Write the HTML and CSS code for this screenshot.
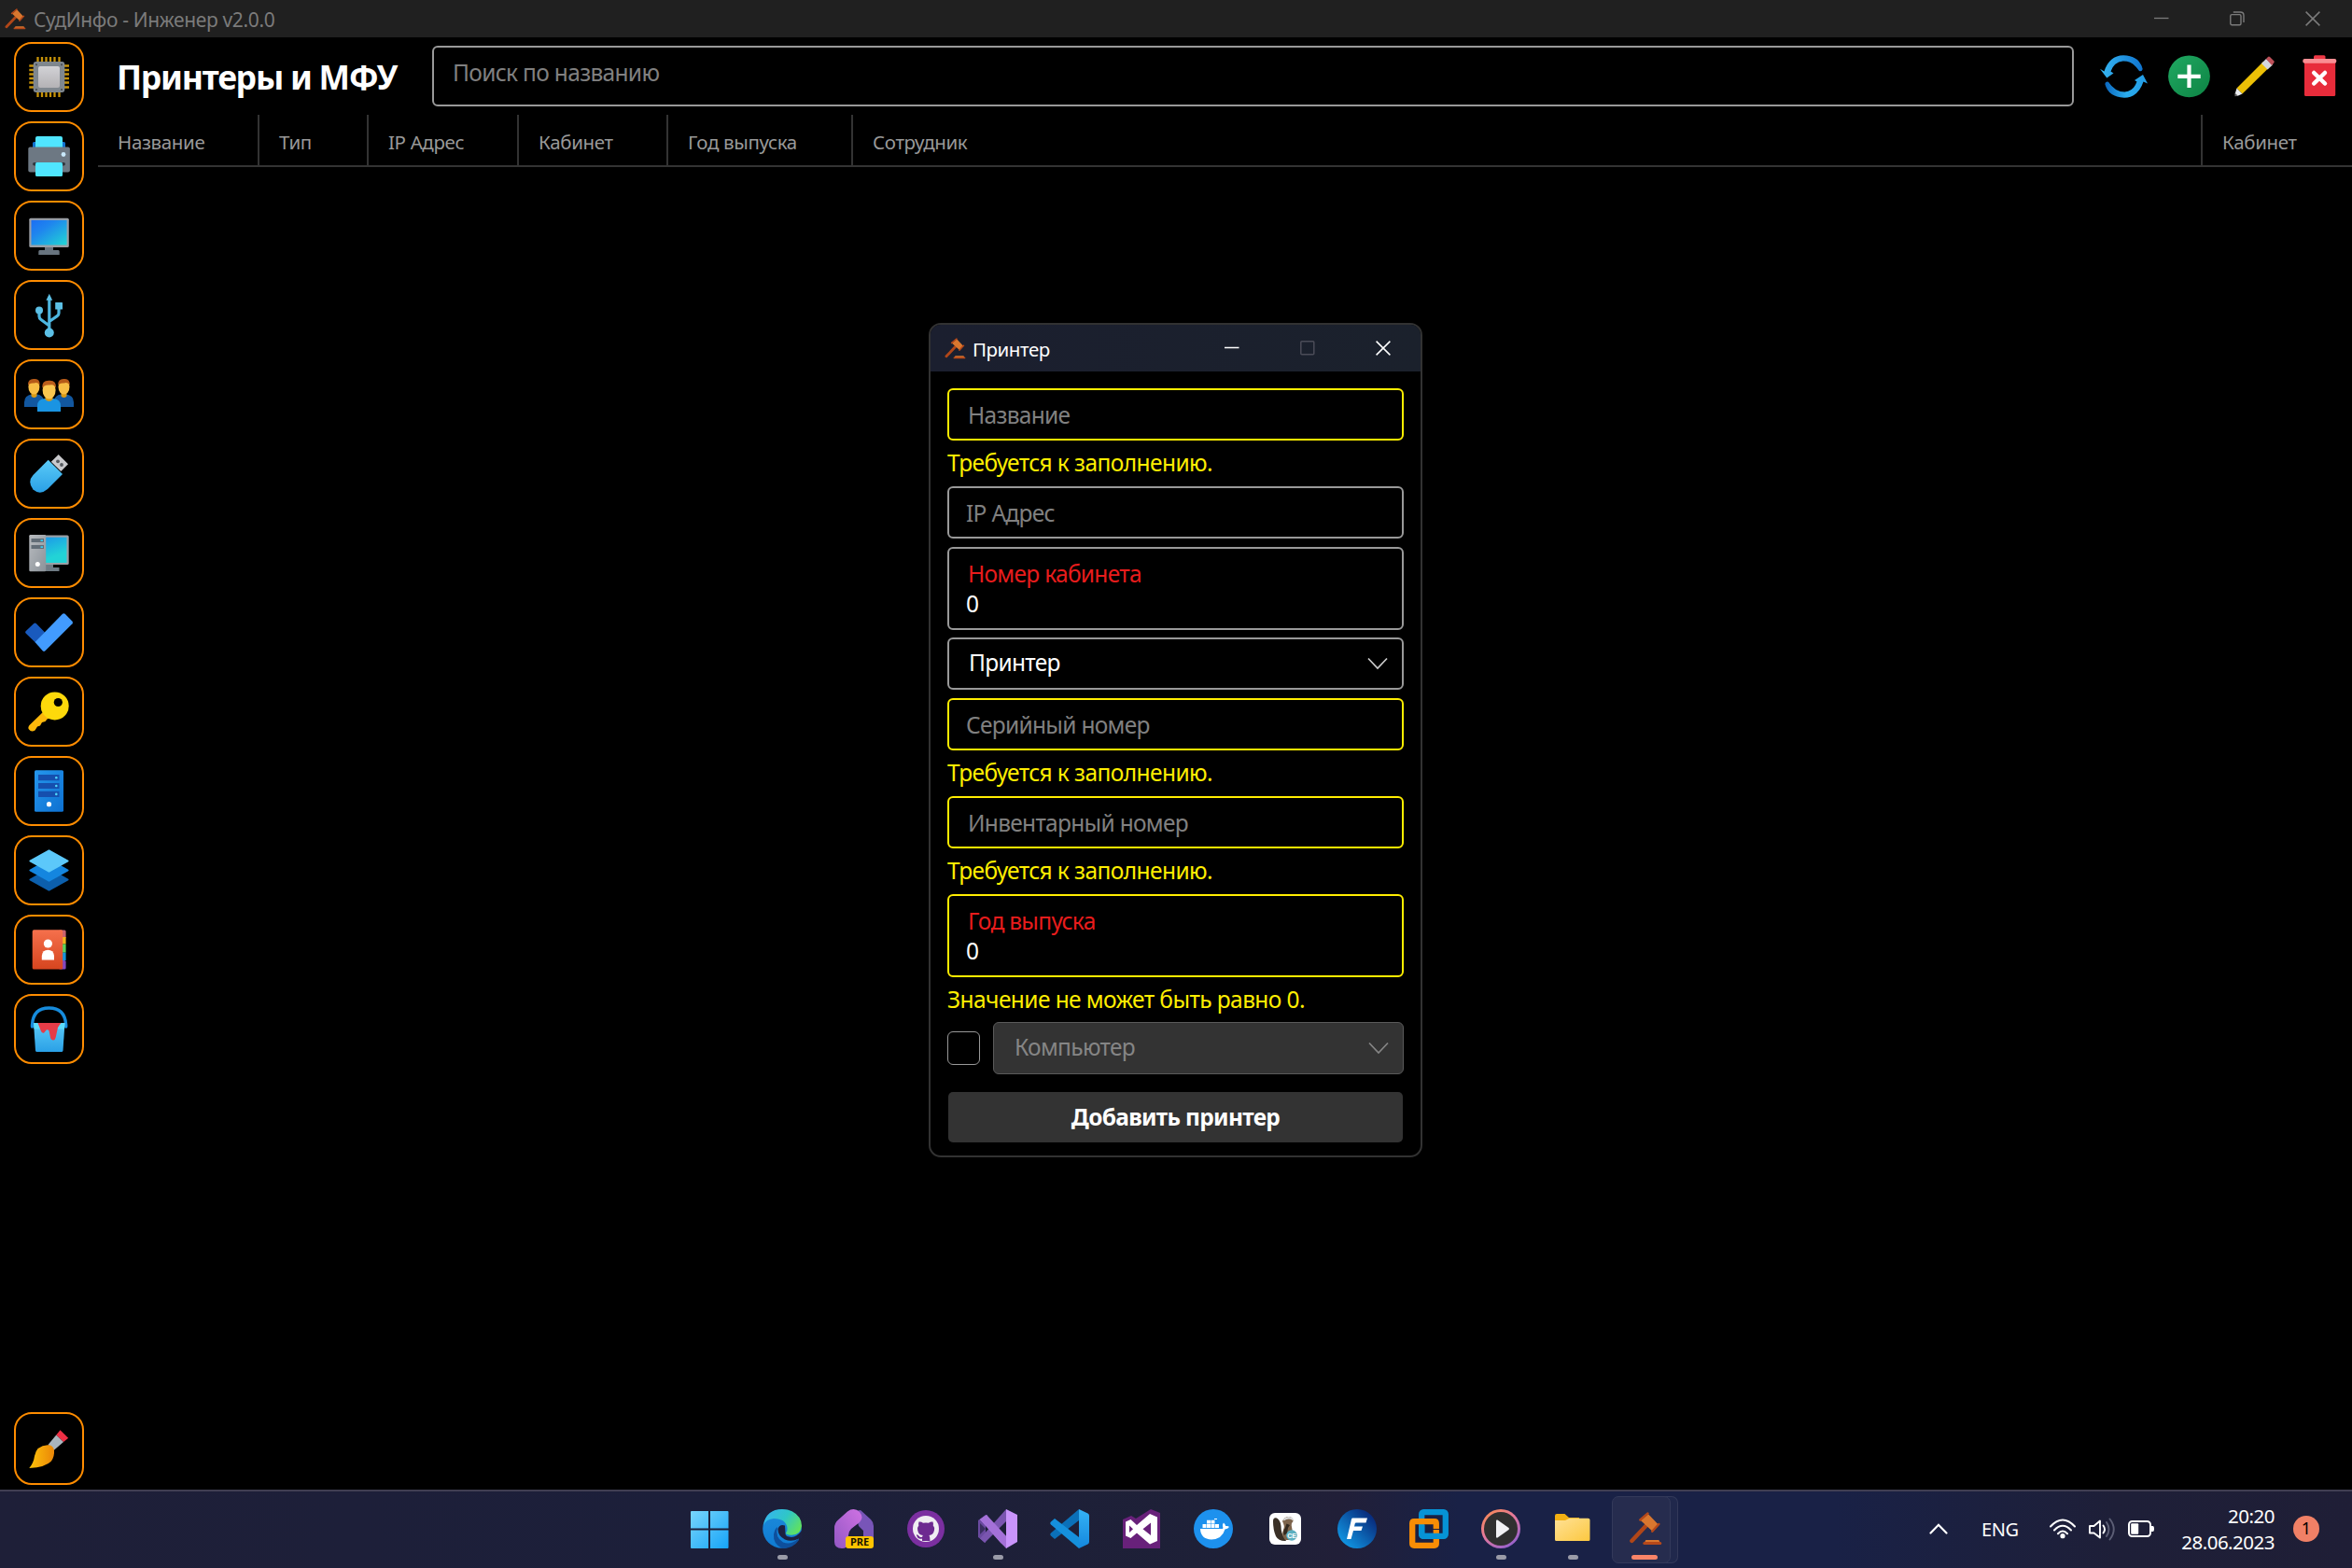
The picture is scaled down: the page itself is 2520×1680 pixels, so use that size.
FILE: index.html
```html
<!DOCTYPE html>
<html lang="ru">
<head>
<meta charset="utf-8">
<title>СудИнфо - Инженер v2.0.0</title>
<link rel="stylesheet" href="styles.css">
</head>
<body>
<svg class="defs" aria-hidden="true">
  <defs>
    <linearGradient id="gScreen" x1="0" y1="0" x2="1" y2="1"><stop offset="0" stop-color="#1b6ef3"/><stop offset=".35" stop-color="#1f86ee"/><stop offset="1" stop-color="#21d6d4"/></linearGradient>
    <linearGradient id="gScreen2" x1="0" y1="0" x2=".3" y2="1"><stop offset="0" stop-color="#1c9be8"/><stop offset=".8" stop-color="#22d3d6"/></linearGradient>
    <linearGradient id="gGrey" x1="0" y1="0" x2="1" y2="1"><stop offset="0" stop-color="#b9bcc0"/><stop offset="1" stop-color="#8b9299"/></linearGradient>
    <linearGradient id="gChip" x1="0" y1="0" x2="0" y2="1"><stop offset="0" stop-color="#d2d2d6"/><stop offset="1" stop-color="#b4b2b5"/></linearGradient>
    <linearGradient id="gSky" x1="0" y1="0" x2="0" y2="1"><stop offset="0" stop-color="#5bcbf8"/><stop offset="1" stop-color="#2aa0e6"/></linearGradient>
    <linearGradient id="gAzure" x1="0" y1="0" x2="1" y2="1"><stop offset="0" stop-color="#2597ee"/><stop offset="1" stop-color="#0d70d0"/></linearGradient>
    <linearGradient id="gRed" x1="0" y1="0" x2="0" y2="1"><stop offset="0" stop-color="#f5704c"/><stop offset="1" stop-color="#d6451f"/></linearGradient>
    <linearGradient id="gBrush" x1="0" y1="0" x2="1" y2="0"><stop offset="0" stop-color="#fec40a"/><stop offset="1" stop-color="#ea8608"/></linearGradient>
    <linearGradient id="gPlus" x1="0" y1="0" x2="1" y2="1"><stop offset="0" stop-color="#20a862"/><stop offset="1" stop-color="#0d8444"/></linearGradient>
    <linearGradient id="gArrowA" x1="0" y1="0" x2="1" y2="0"><stop offset="0" stop-color="#37b8f3"/><stop offset="1" stop-color="#0f74cf"/></linearGradient>
    <linearGradient id="gArrowB" x1="0" y1="0" x2="1" y2="0"><stop offset="0" stop-color="#0a66be"/><stop offset=".5" stop-color="#2aaced"/><stop offset="1" stop-color="#239ce6"/></linearGradient>
    <linearGradient id="gWin" x1="0" y1="0" x2="1" y2="1"><stop offset="0" stop-color="#78d5fb"/><stop offset="1" stop-color="#16a4f8"/></linearGradient>
    <linearGradient id="gEdgeTop" x1="0" y1=".2" x2="1" y2=".7"><stop offset="0" stop-color="#36b4ee"/><stop offset=".5" stop-color="#2fc6c8"/><stop offset="1" stop-color="#63e25a"/></linearGradient>
    <linearGradient id="gEdge" x1="0" y1="0" x2="0" y2="1"><stop offset="0" stop-color="#1d8bdb"/><stop offset="1" stop-color="#0f7bd3"/></linearGradient>
    <linearGradient id="gHome" x1="0" y1="1" x2="1" y2="0"><stop offset="0" stop-color="#9357c4"/><stop offset="1" stop-color="#cf72e3"/></linearGradient>
    <linearGradient id="gCode" x1="0" y1="0" x2="0" y2="1"><stop offset="0" stop-color="#35b3f6"/><stop offset="1" stop-color="#1487dd"/></linearGradient>
    <linearGradient id="gFork" x1="1" y1="0" x2="0" y2="1"><stop offset="0" stop-color="#061567"/><stop offset="1" stop-color="#12a9f5"/></linearGradient>
    <linearGradient id="gMedia" x1="0" y1="0" x2=".7" y2="1"><stop offset="0" stop-color="#fa8d45"/><stop offset=".5" stop-color="#e6799c"/><stop offset="1" stop-color="#9561cd"/></linearGradient>
    <linearGradient id="gFolder" x1="0" y1="0" x2="1" y2="1"><stop offset="0" stop-color="#ffe196"/><stop offset="1" stop-color="#fcc840"/></linearGradient>
    <symbol id="gavel" viewBox="0 0 35 36">
      <path d="M2.5 31 18 14.5" stroke="#b04618" stroke-width="4.4" stroke-linecap="round"/>
      <path d="M12 9 20 2 31 13.500 24.500 20.500Z" fill="#d9772f"/>
      <path d="M11.500 8.500 19.700 1.500M24.500 20.800 31.500 13" stroke="#b5481a" stroke-width="2.400" stroke-linecap="round"/>
      <path d="M17.500 30H31.500L33 33H16Z" fill="#d9772f"/><rect x="14.500" y="32" width="20" height="3" rx="1.500" fill="#b5481a"/>
    </symbol>
    <symbol id="chevron" viewBox="0 0 22 14"><path d="M1 1.500 11 12 21 1.500" fill="none" stroke="currentColor" stroke-width="1.700"/></symbol>
    <symbol id="win-close" viewBox="0 0 16 16"><path d="M.6.6 15.400 15.400M15.400.6.6 15.400" stroke="currentColor" stroke-width="1.500"/></symbol>
    <symbol id="win-min" viewBox="0 0 16 16"><path d="M0 7.500H15.500" stroke="currentColor" stroke-width="1.300"/></symbol>
    <symbol id="win-max" viewBox="0 0 16 16"><rect x=".8" y=".8" width="14" height="14" rx="1" fill="none" stroke="currentColor" stroke-width="1.500"/></symbol>
    <symbol id="win-restore" viewBox="0 0 16 16"><g fill="none" stroke="currentColor" stroke-width="1.400"><rect x=".8" y="3.600" width="11.200" height="11.200" rx="1.500"/><path d="M3.800 1H11.500Q15 1 15 4.500V12"/></g></symbol>
  </defs>
</svg>

<header class="titlebar">
  <svg class="titlebar-logo"><use href="#gavel"/></svg>
  <span class="titlebar-text">СудИнфо - Инженер v2.0.0</span>
  <div class="window-controls">
    <svg><use href="#win-min"/></svg><svg><use href="#win-restore"/></svg><svg><use href="#win-close"/></svg>
  </div>
</header>

<div class="app">
  <nav class="sidebar">
    <button class="nav-btn"><svg viewBox="2 2 71 71"><path d="M25.500 16V59M30 16V59M34.500 16V59M39 16V59M43.500 16V59M48.500 16V59M16.300 25.500H59M16.300 30H59M16.300 34.500H59M16.300 39H59M16.300 43.500H59M16.300 48.500H59" stroke="#c79308" stroke-width="2.300"/><rect x="20.700" y="21" width="33.600" height="33" rx="3" fill="#7f878e"/><rect x="26" y="26" width="23" height="23" rx="2" fill="url(#gChip)"/><g fill="#454b52"><circle cx="24" cy="24.300" r="1.100"/><circle cx="51" cy="24.300" r="1.100"/><circle cx="24" cy="51" r="1.100"/><circle cx="51" cy="51" r="1.100"/></g></svg></button>
    <button class="nav-btn"><svg viewBox="2 2 71 71"><rect x="20" y="22" width="35" height="8" rx="1.500" fill="#1272cf"/><rect x="23" y="16" width="29" height="14" rx="2" fill="#50e6ff"/><rect x="15.300" y="27.500" width="44.600" height="27" rx="2" fill="#6d7883"/><rect x="20" y="44" width="35" height="3.500" rx="1.700" fill="#30373e"/><rect x="23" y="44" width="29" height="15" rx="1.500" fill="#50e6ff"/><circle cx="53" cy="35.500" r="2.400" fill="#c8e8fa"/></svg></button>
    <button class="nav-btn"><svg viewBox="2 2 71 71"><path d="M33 49H42V53H47.500Q48.700 53 48.700 54.500V58H26.300V54.500Q26.300 53 27.500 53H33Z" fill="#68747f"/><rect x="16.300" y="18.700" width="42.500" height="31.300" rx="1.500" fill="#9b9fa5"/><rect x="18.500" y="20.900" width="38.100" height="26.600" fill="url(#gScreen)"/></svg></button>
    <button class="nav-btn"><svg viewBox="2 2 71 71"><g fill="none" stroke="#4db6e0" stroke-width="3.200"><path d="M37.800 20V54M27 34V39Q27 41 29 42.500L37.800 49M48 29V35.500Q48 37.500 46.200 38.700L37.800 44.500"/></g><g fill="#5cc0e6"><path d="M37.800 14.700 41.200 21.700H34.400Z"/><circle cx="27" cy="32.500" r="4"/><rect x="44.200" y="24" width="7.800" height="7.600" rx=".5"/><circle cx="37.800" cy="56.500" r="5"/></g></svg></button>
    <button class="nav-btn"><svg viewBox="2 2 71 71"><path d="M11 51V46Q11 38 20 37.500H24Q31 38 32 44V51ZM64 51V46Q64 38 55 37.500H51Q44 38 43 44V51Z" fill="#12579f"/><path d="M18.500 34H24.500V39.500Q21.500 42.500 18.500 39.500ZM50.500 34H56.500V39.500Q53.500 42.500 50.500 39.500Z" fill="#d99a16"/><ellipse cx="21.400" cy="29.500" rx="6" ry="8" fill="#f7be45"/><ellipse cx="53.500" cy="29.500" rx="6" ry="8" fill="#f7be45"/><path d="M15 28Q14.500 20.500 22 21Q28 20.500 27.600 28Q26 24 21.500 25.500Q16.500 25 15 28ZM47.200 28Q46.700 20.500 54 21Q60 20.500 59.800 28Q58 24 53.500 25.500Q48.500 25 47.200 28Z" fill="#b55a18"/><path d="M25 56V50Q25 42.500 33 42H42Q50 42.500 50 50V56Z" fill="#1a94e2"/><path d="M33.500 38H41.500V43Q37.500 47 33.500 43Z" fill="#d99a16"/><ellipse cx="37.600" cy="33" rx="7" ry="9.500" fill="#fac64f"/><path d="M30.200 31Q29.500 22.500 37.500 22.700Q45.500 22 45.200 31Q43 26 38 27.500Q32 27 30.200 31Z" fill="#bb5e1b"/></svg></button>
    <button class="nav-btn"><svg viewBox="2 2 71 71"><path d="M47.700 17 58 27.300 50.300 35 39.800 24.700Z" fill="#c9c9cc"/><circle cx="47" cy="24.300" r="1.900" fill="#55595e"/><circle cx="51" cy="28" r="1.900" fill="#55595e"/><path d="M36.700 22.700 52 38 36 54Q28 61 20.500 54.500Q14 46 20.500 39Z" fill="url(#gSky)"/></svg></button>
    <button class="nav-btn"><svg viewBox="2 2 71 71"><path d="M33 49H42V53H48.500V57H33Z" fill="#6f7b84"/><rect x="30" y="18.500" width="28.700" height="31.500" rx="1.500" fill="#9b9fa5"/><rect x="34" y="20.700" width="22.500" height="27.300" fill="url(#gScreen2)"/><rect x="16.300" y="18" width="17.900" height="39.300" rx="1.200" fill="url(#gGrey)"/><path d="M18.500 22H32V26H18.500ZM18.500 29H32V33H18.500Z" fill="#626d77"/><path d="M28.500 23.200H31V25H28.500ZM28.500 30.200H31V32H28.500Z" fill="#3ccbf0"/><circle cx="25.300" cy="49.500" r="2.500" fill="#fff"/></svg></button>
    <button class="nav-btn"><svg viewBox="2 2 71 71"><path d="M21 28.200Q22.500 27 24 28.200L33 37.500 23 48.500 12.600 38.500Q11.500 37 12.600 36.200Z" fill="#195abd"/><path d="M52 17.800Q53.300 16.500 54.700 17.800L62.500 25.800Q63.500 27 62.500 28.200L33.500 57.300Q32 58.500 30.700 57.300L22.500 48Z" fill="#429bff"/></svg></button>
    <button class="nav-btn"><svg viewBox="2 2 71 71"><path d="M33 36 16.500 52Q14.500 54.500 16 56.500Q18.500 60 22.500 57.500L25 53.500 28 52.500 30 49 33.500 48 35.500 45.500 42 43Z" fill="#fdb80b"/><circle cx="43.700" cy="31.400" r="15" fill="#fdd90b"/><circle cx="47.300" cy="27.500" r="4.600" fill="#000"/></svg></button>
    <button class="nav-btn"><svg viewBox="2 2 71 71"><rect x="22" y="15.200" width="31" height="44.500" rx="1.500" fill="url(#gAzure)"/><path d="M26 20H48.500V26.300H26ZM26 29H48.500V35H26ZM26 37.800H48.500V44H26Z" fill="#154fae"/><g fill="#4fd5fa"><circle cx="45.300" cy="23.200" r="1.300"/><circle cx="45.300" cy="32" r="1.300"/><circle cx="45.300" cy="40.900" r="1.300"/></g><circle cx="37.500" cy="51.700" r="2.600" fill="#fff"/></svg></button>
    <button class="nav-btn"><svg viewBox="2 2 71 71"><path d="M16.800 46.800 37.500 35 58.200 46.800Q59.200 47.500 58.200 48.200L37.500 59.700 16.800 48.200Q15.800 47.500 16.800 46.800Z" fill="#0c5fac"/><path d="M16.800 36.800 37.500 25 58.200 36.800Q59.200 37.500 58.200 38.200L37.500 49.700 16.800 38.200Q15.800 37.500 16.800 36.800Z" fill="#1486df"/><path d="M16.800 26.800 37.500 15.200 58.200 26.800Q59.200 27.500 58.200 28.200L37.500 39.700 16.800 28.200Q15.800 27.500 16.800 26.800Z" fill="#5cc8fa"/></svg></button>
    <button class="nav-btn"><svg viewBox="2 2 71 71"><rect x="48" y="16.500" width="7.600" height="9" rx="1.500" fill="#c8626f"/><path d="M48 24H55.600V31.500H48Z" fill="#f2b51c"/><path d="M48 31.500H55.600V40.700H48Z" fill="#5ad35c"/><path d="M48 40.700H55.600V49H48Z" fill="#1694dc"/><rect x="48" y="49" width="7.600" height="9.600" rx="1.500" fill="#8447bd"/><rect x="19.700" y="16.300" width="32.500" height="42.300" rx="1.700" fill="url(#gRed)"/><circle cx="36.400" cy="31" r="4.600" fill="#fff"/><path d="M29.800 48.600V44Q30.500 37.700 36.400 37.700T43 44V48.600Z" fill="#fff"/></svg></button>
    <button class="nav-btn"><svg viewBox="2 2 71 71"><path d="M19.500 35V33Q20.500 15 37.500 15T55.700 33V35" fill="none" stroke="#168bdc" stroke-width="3.400" stroke-linecap="round"/><path d="M21 31H54.500L52.500 60.500Q52.300 62 51 62H24.500Q23.300 62 23 60.500Z" fill="url(#gSky)"/><path d="M21 31H54.500L54 37.500H21.500Z" fill="#5bdcfc"/><path d="M25.500 31H50.500Q48 34 47 36L44.700 46.500Q44 49.800 41.800 49.500 39 49 38.700 45L37.500 39.500Q36.500 37.500 34.700 38.500L32.500 41.300Q30.500 42.800 29 40Z" fill="#e63c48"/></svg></button>
    <button class="nav-btn nav-btn-bottom"><svg viewBox="2 3.500 71 71"><path d="M49.500 18.800 58.200 27.200 53 31.500 45.200 24Z" fill="#ee2f44"/><path d="M45.200 24 53 31.500 42.500 40.500 36.500 34.500Z" fill="#a9b5be"/><path d="M36 34.800Q42 34.500 43 40.500 43.500 47 40 52 34 58.500 16.300 59.500 21 54 22 46.500 24 35.500 36 34.800Z" fill="url(#gBrush)"/></svg></button>
  </nav>

  <main class="content">
    <div class="toolbar">
      <h1 class="page-title">Принтеры и МФУ</h1>
      <div class="search">Поиск по названию</div>
      <svg class="tool" viewBox="0 0 51 46"><path d="M4.500 17.500Q10 .7 25 .3 42 .7 45.700 15 45 18 42 17 35 6 24.500 6.500 15 7.500 11.500 17.500L14.500 19.500 7.300 24.500 0 14.800Z" fill="url(#gArrowA)"/><path d="M46.500 28.500Q41 45.300 26 45.700 9 45 5.300 31 5.700 27.700 9 28.700 16 39.500 26.500 39.500 36 38.500 39.500 28.500L37 27 46 21 51 30.500Z" fill="url(#gArrowB)"/></svg>
      <svg class="tool" viewBox="-3 0 51 46"><circle cx="22.500" cy="22.800" r="22.400" fill="url(#gPlus)"/><path d="M22.500 10.500V35M10.300 22.800H34.700" stroke="#fff" stroke-width="4.200"/></svg>
      <svg class="tool" viewBox="-4 0 51 46"><path d="M2.500 35.500 31 7 37 13.500 8.500 41.500Z" fill="#ecc006"/><path d="M29 9 34 4 41 10.500 35.500 15.500Z" fill="#d4d7dc"/><path d="M34 4 36 1.900Q37 1.200 38 2L42.500 6.500Q43 7.500 42.200 8.600L40 11Z" fill="#bd5059"/><path d="M2.500 35.500 8.500 41.500 3 44 .5 42Z" fill="#e9ebee"/><path d="M1 41 4 43.700.3 44.200Z" fill="#666"/></svg>
      <svg class="tool" viewBox="-7 0 51 46"><rect x="12" y=".3" width="12.500" height="5" rx="1.500" fill="#ef3946"/><rect x="2" y="6" width="33.200" height="38" rx="1.500" fill="#e82c3b"/><rect x=".3" y="4" width="36" height="4.800" rx="2" fill="#fa8e93"/><path d="M12.200 19 24 30.500M24 19 12.200 30.500" stroke="#fff" stroke-width="4.500" stroke-linecap="round"/></svg>
    </div>
    <div class="table-head">
      <div class="th">Название</div>
      <div class="th">Тип</div>
      <div class="th">IP Адрес</div>
      <div class="th">Кабинет</div>
      <div class="th">Год выпуска</div>
      <div class="th">Сотрудник</div>
      <div class="th">Кабинет</div>
    </div>
  </main>
</div>

<section class="dialog">
  <header class="dialog-bar">
    <svg class="titlebar-logo"><use href="#gavel"/></svg>
    <span class="dialog-title">Принтер</span>
    <div class="window-controls">
      <svg><use href="#win-min"/></svg><svg class="disabled"><use href="#win-max"/></svg><svg><use href="#win-close"/></svg>
    </div>
  </header>
  <form class="form">
    <div class="field invalid indent">Название</div>
    <div class="message">Требуется к заполнению.</div>
    <div class="field">IP Адрес</div>
    <div class="field tall gap-9"><span class="float-label">Номер кабинета</span><span class="value">0</span></div>
    <div class="field select gap-8"><span>Принтер</span><svg class="chev"><use href="#chevron"/></svg></div>
    <div class="field invalid gap-9">Серийный номер</div>
    <div class="message">Требуется к заполнению.</div>
    <div class="field invalid indent">Инвентарный номер</div>
    <div class="message">Требуется к заполнению.</div>
    <div class="field tall invalid"><span class="float-label">Год выпуска</span><span class="value">0</span></div>
    <div class="message message-last">Значение не может быть равно 0.</div>
    <div class="computer-row">
      <span class="checkbox"></span>
      <div class="field select off"><span>Компьютер</span><svg class="chev"><use href="#chevron"/></svg></div>
    </div>
    <div class="submit">Добавить принтер</div>
  </form>
</section>

<footer class="taskbar">
  <div class="tasks">
    <div class="task"><svg viewBox="1 0 42 42"><path d="M1 2H19V20.500H0V3Q0 2 1 2ZM21 2H39.500Q40.500 2 40.500 3V20.500H21ZM0 22.500H19V42H1Q0 42 0 41ZM21 22.500H40.500V41Q40.500 42 39.500 42H21Z" fill="url(#gWin)" transform="translate(1 0)"/></svg></div>
    <div class="task running"><svg viewBox="0 0 42 42"><circle cx="21" cy="21" r="20.800" fill="url(#gEdge)"/><path d="M16 19Q13 30 22 35.500 30 39 38.500 31.500 39.500 31.800 38.700 33.500 33 42 21 42 11 37 12 27 13 21 16 19Z" fill="#0e4f9c"/><path d="M24.500 26.500Q24.500 29.500 31 30 37 29.500 41 24L43 22V31L39 31.500Q31 35.500 24 32.500 16 28.500 16.500 21 18.500 15.500 24 17.500Z" fill="#1d2040"/><path d="M1 17Q4 0 21 0 33 0 39.500 9 42 13 42 18 41 27.500 31 27.800 25 27.500 25 25.500 27 23.500 26.500 20 25 10 12 10 4 10.500 1 17Z" fill="url(#gEdgeTop)"/></svg></div>
    <div class="task"><svg viewBox="0 0 42 42"><path d="M22 2 28 1 39 11Q42 14 42 18V36H31V23L26 18Z" fill="#7855b8"/><path d="M0 20Q0 15 4 11.500L14 2.500Q21-2.500 27 3 32 9 27 14L18 21Q15 24 15 28V36Q14 42 8 42 0 42 0 35Z" fill="url(#gHome)"/><rect x="12" y="29" width="30" height="13" rx="3" fill="#ffc400"/><text x="27" y="39.300" text-anchor="middle" class="pre">PRE</text></svg></div>
    <div class="task"><svg viewBox="0 0 42 42"><circle cx="21" cy="21" r="20" fill="#7b2fa0"/><circle cx="21" cy="21" r="14" fill="#f0edf2"/><path d="M13.500 13.500Q16 13 18 14.800 21 14.200 24 14.800 26 13 28.500 13.500 29.300 16 28.700 17.300 30.500 19.300 30 22.500 29 27.500 24.500 28 25.500 29.500 25.500 34H17V31.500Q12.500 32.500 11.500 29 10.500 27.500 11 27.300 13 27.500 13.800 29 15 30.500 17 29.700L17.800 28Q13 27.500 12.200 22.500 11.700 19.300 13.400 17.300 12.800 16 13.500 13.500Z" fill="#6d2a90"/></svg></div>
    <div class="task running"><svg viewBox="0 0 42 42"><path d="M0 12 8 6V36L0 30Z" fill="#6a4aa0"/><path d="M7 36 2 31.500 30 0V13Z" fill="#7a55b0"/><path d="M2 11 9 6 31 42 24 36Z" fill="#a978d8"/><path d="M2 11 9 6 33 32 30 42Z" fill="#a471d8"/><path d="M30 0 42 6V35L30 42Z" fill="#c994fb"/><path d="M2 15 8 21 2 27Z" fill="#3a2e60"/></svg></div>
    <div class="task"><svg viewBox="0 0 42 42"><path d="M5 32 1 28.500Q-.5 27 1 25.500L31 0V12Z" fill="#0b70b8"/><path d="M5 10 1 13.500Q-.5 15 1 16.500L31 42V30Z" fill="#1590dc"/><path d="M31 0 40.500 4.500Q42 5.200 42 7V35Q42 36.800 40.500 37.500L31 42Z" fill="url(#gCode)"/></svg></div>
    <div class="task"><svg viewBox="-1 0 42 42"><path d="M0 11 9 7 14 10 30 0 40 4V42H0Z" fill="#68217a"/><path fill-rule="evenodd" d="M3 13.500 8.500 11 15 17 29 5 37 8.500V34L29 37.500 15 25.500 8.500 31 3 28.500ZM7 17.500V25L11 21.300ZM30 14.500 21.500 21.300 30 28Z" fill="#fff"/></svg></div>
    <div class="task"><svg viewBox="0 0 42 42"><circle cx="21" cy="21" r="21" fill="#1d91ee"/><path d="M7 21H31Q31.800 20.500 31 18 30.500 16 32 14.500 34 16 34.200 18Q37 17.500 38 19 36.500 21 33.500 21.500 30.500 32 19 32.500 7.500 32 7 21Z" fill="#fff"/><path d="M9.500 16H13.500V20H9.500ZM14 16H18V20H14ZM18.500 16H22.500V20H18.500ZM23 16H27V20H23ZM14 11.800H18V15.500H14ZM18.500 11.800H22.500V15.500H18.500ZM22 10H25V11H22Z" fill="#fff"/></svg></div>
    <div class="task"><svg viewBox="0 0 42 42"><rect x="4" y="4" width="34" height="34" rx="6" fill="#fff"/><path d="M8 13Q8 8.500 12 9.500 16 12 16.500 18 16.500 26 20 30L22 34Q14 34.500 11 29 8 22 8 13Z" fill="#3a3026"/><path d="M18 13Q20 7.500 26 8 29.500 9 29.500 13 27 15 28 19 30 27 27 33H21Q16.500 28 19 22 21 18 18 13Z" fill="#7d644c"/><path d="M19 10.500Q24 6 29.500 9.500L29 12Q24.500 9 19.500 12.500Z" fill="#dcdcdc"/><path d="M22.500 15.500 26 17 24 20 23 26 19.500 28Q18.500 23 21 20Z" fill="#33291f"/><circle cx="28" cy="28" r="5.800" fill="#5bafc0"/><text x="28" y="31" text-anchor="middle" class="ce">CE</text></svg></div>
    <div class="task"><svg viewBox="0 0 42 42"><circle cx="21" cy="21" r="21" fill="url(#gFork)"/><path d="M16 9.500H32L30.500 14.500H20Q19 14.500 18.700 15.500L18 18.500H27L25.500 23H17L14.500 32H10L14.500 13Q15 9.500 16 9.500Z" fill="#fff"/></svg></div>
    <div class="task"><svg viewBox="0 0 42 42"><g fill="none" stroke-width="6.300"><rect x="13.200" y="3.200" width="25.600" height="25.600" rx="2" stroke="#0693d6"/><path d="M28.800 22V36.800Q28.800 38.800 26.800 38.800H5.200Q3.200 38.800 3.200 36.800V15.200Q3.200 13.200 5.200 13.200H26.800Q28.800 13.200 28.800 15.200V21" stroke="#f88d06"/><path d="M13.200 17V26.800Q13.200 28.800 15.200 28.800H32" stroke="#0693d6"/></g></svg></div>
    <div class="task running"><svg viewBox="0 0 42 42"><circle cx="21" cy="21" r="21" fill="url(#gMedia)"/><circle cx="21" cy="21" r="18" fill="#303030"/><path d="M16 12.500Q16 11 17.500 11.500L29.500 20Q30.500 21 29.500 22L17.500 30.500Q16 31 16 29.500Z" fill="#f2f2f4"/></svg></div>
    <div class="task running"><svg viewBox="0 0 42 42"><path d="M2 7Q2 5 4 5H12.500L17 9H28V20H2Z" fill="#f2af12"/><path d="M2 12H13L17.500 9.700H37.500Q39.500 9.700 39.500 11.500V32.500Q39.500 34 38 34H3.500Q2 34 2 32.500Z" fill="url(#gFolder)"/></svg></div>
    <div class="task active"><svg viewBox="0 0 42 42"><use href="#gavel" x="4.800" y="3" width="35" height="36"/></svg></div>
  </div>
  <div class="tray">
    <svg class="tray-up" viewBox="0 0 20 12"><path d="M1.500 10.500 10 1.800 18.500 10.500" fill="none" stroke="#fff" stroke-width="2.200" stroke-linecap="round"/></svg>
    <span class="lang">ENG</span>
    <svg class="tray-wifi" viewBox="0 0 28 22"><g fill="none" stroke="#fff" stroke-width="2" stroke-linecap="round"><path d="M1 8.500Q14-5.500 27 8.500M5 12.500Q14 3 23 12.500M9 16.200Q14 11 19 16.200"/></g><circle cx="14" cy="18.700" r="2.600" fill="#fff"/></svg>
    <svg class="tray-vol" viewBox="0 0 28 25"><g fill="none" stroke-width="1.900" stroke-linecap="round" stroke-linejoin="round"><path d="M1 9H5.500L12 3.500V21.500L5.500 16.500H1ZM15.500 8.500Q18.500 12.500 15.500 16.500" stroke="#fff"/><path d="M19 5Q24 12.500 19 20M22.500 1.500Q31 12.500 22.500 23.500" stroke="#5c5e75"/></g></svg>
    <svg class="tray-bat" viewBox="0 0 28 18"><rect x="1" y="1" width="23" height="16" rx="3.500" fill="none" stroke="#fff" stroke-width="2"/><rect x="3.200" y="3.200" width="8" height="11.600" rx="1" fill="#fff"/><path d="M25 6H26.500Q28 6 28 9T26.500 12H25Z" fill="#fff"/></svg>
    <div class="clock"><span>20:20</span><span>28.06.2023</span></div>
    <span class="badge">1</span>
  </div>
</footer>
</body>
</html>
```
FILE: styles.css
```css
* { box-sizing: border-box; }

body {
  margin: 0;
  width: 2520px;
  height: 1680px;
  overflow: hidden;
  display: flex;
  flex-direction: column;
  background: #000;
  color: #fff;
  font-family: "Noto Sans", "Open Sans", sans-serif;
  white-space: nowrap;
}

svg { display: block; flex: none; }
.defs { position: absolute; width: 0; height: 0; }

/* Main window */
.titlebar {
  height: 40px;
  flex: none;
  display: flex;
  align-items: center;
  padding: 0 34px 0 5px;
  background: #202020;
  color: #7b7b7b;
}
.titlebar-logo { width: 23px; height: 23px; }
.titlebar-text {
  margin-left: 8px;
  font-size: 21px;
  line-height: 40px;
  padding-top: 2px;
  letter-spacing: -0.35px;
}
.window-controls { margin-left: auto; display: flex; gap: 65px; }
.window-controls svg { width: 16px; height: 16px; }

.app { flex: 1; display: flex; min-height: 0; }

.sidebar {
  width: 105px;
  flex: none;
  padding: 5px 15px;
  display: flex;
  flex-direction: column;
  gap: 10px;
}
.nav-btn {
  width: 75px;
  height: 75px;
  flex: none;
  padding: 0;
  display: grid;
  place-items: center;
  background: #000;
  border: 2px solid #ff8c00;
  border-radius: 19px;
}
.nav-btn svg { width: 71px; height: 71px; }
.nav-btn-bottom { height: 78px; margin-top: auto; }

.content { flex: 1; min-width: 0; }
.toolbar {
  height: 83px;
  display: flex;
  align-items: flex-start;
  padding: 9px 9px 0 20px;
}
.page-title {
  margin: 0;
  width: 338px;
  flex: none;
  font-size: 35.500px;
  font-weight: 700;
  line-height: 66px;
  letter-spacing: -1.25px;
}
.search {
  width: 1759px;
  flex: none;
  height: 65px;
  padding: 0 0 0 20px;
  line-height: 54px;
  border: 2px solid #999;
  border-radius: 6px;
  font-size: 24.500px;
  letter-spacing: -0.68px;
  color: #808080;
}
.tool { width: 51px; height: 46px; margin: 10px 0 0 19px; }
.search + .tool { margin-left: 28px; }

.table-head {
  height: 56px;
  display: grid;
  grid-template-columns: 173px 117px 161px 160px 198px 1446px 160px;
  border-bottom: 2px solid #333;
}
.th {
  height: 56px;
  border-right: 2px solid #333;
  padding-left: 21px;
  font-size: 20.500px;
  line-height: 59px;
  letter-spacing: -0.35px;
  color: #999;
}
.th:last-child { border-right: 0; }

/* Printer dialog floating over the main window */
.dialog {
  position: absolute;
  left: 995px;
  top: 346px;
  width: 529px;
  height: 894px;
  border: 2px solid #323232;
  border-radius: 13px;
  overflow: hidden;
  background: #000;
}
.dialog-bar {
  height: 50px;
  display: flex;
  align-items: center;
  padding: 0 32px 0 15px;
  background: linear-gradient(90deg, #1b1f2f, #1b212c);
}
.dialog-title {
  margin-left: 7px;
  padding-top: 1px;
  font-size: 20.500px;
  letter-spacing: -0.45px;
}
.dialog-bar .disabled { color: #4b4c58; }

.form {
  padding: 18px 18px 0;
  font-size: 24.500px;
  letter-spacing: -0.7px;
}
.field {
  height: 56px;
  padding-left: 18px;
  line-height: 53px;
  border: 2px solid #999;
  border-radius: 6px;
  color: #808080;
}
.invalid { border-color: #ffee00; }
.indent { padding-left: 20px; }
.gap-9 { margin-top: 9px; }
.gap-8 { margin-top: 8px; }
.tall {
  height: 89px;
  padding-top: 11px;
  line-height: 32px;
  display: flex;
  flex-direction: column;
}
.float-label { color: #e81c1c; padding-left: 2px; }
.value { color: #fff; }
.message {
  height: 49px;
  line-height: 48px;
  letter-spacing: -0.58px;
  color: #ffee00;
}
.message-last { height: 48px; }
.select {
  display: flex;
  justify-content: space-between;
  align-items: center;
  padding: 0 15px 3px 21px;
  color: #fff;
}
.chev { width: 22px; height: 14px; color: #ccc; margin-top: 3px; }
.computer-row { display: flex; align-items: center; gap: 14px; }
.checkbox {
  width: 35px;
  height: 36px;
  border: 1.500px solid #999;
  border-radius: 6px;
}
.off {
  flex: 1;
  background: #333;
  border: 1px solid #5a5a5a;
  color: #858585;
  padding-left: 22px;
}
.off .chev { color: #858585; }
.submit {
  height: 54px;
  margin: 19px 1px 0;
  line-height: 53px;
  text-align: center;
  border-radius: 5px;
  background: #333;
  color: #fff;
  font-weight: 700;
}

/* Taskbar */
.taskbar {
  height: 84px;
  flex: none;
  display: flex;
  justify-content: space-between;
  padding-left: 722px;
  border-top: 2px solid #403e52;
  background: linear-gradient(90deg, #1e1f38 0, #1c1f3a 30%, #1e2037 53%, #211f38 57%, #192146 62%, #192146 78%, #1e1f38 90%, #1f1e36 100%);
}
.tasks { display: flex; }
.task {
  position: relative;
  width: 77px;
  padding: 19px 0 0 17.500px;
}
.task svg { width: 42px; height: 42px; position: relative; }
.running::after,
.active::after {
  content: "";
  position: absolute;
  left: 33.500px;
  bottom: 9px;
  width: 11px;
  height: 5px;
  border-radius: 3px;
  background: #9a9ba8;
}
.active::after { left: 25px; width: 28px; background: #f98468; }
.active::before {
  content: "";
  position: absolute;
  left: 4px;
  top: 5px;
  width: 61px;
  height: 70px;
  border-radius: 7px;
  background: #262c4e;
  border: 1px solid #33395a;
  box-shadow: 8px 0 0 -1px #20284c, 8px 0 0 0 #33395a;
}
.pre { font: 700 11px "Noto Sans", sans-serif; fill: #1a1400; }
.ce { font: 700 7px "Liberation Sans", sans-serif; fill: #fff; }

.tray { display: flex; align-items: center; padding: 0 35px 2px 0; }
.tray-up { width: 20px; height: 12px; }
.lang { margin-left: 36px; width: 42px; font-size: 20px; letter-spacing: -0.4px; padding-top: 1px; }
.tray-wifi { width: 28px; height: 22px; margin-left: 31px; }
.tray-vol { width: 28px; height: 25px; margin-left: 14px; }
.tray-bat { width: 28px; height: 18px; margin-left: 14px; }
.clock {
  width: 129px;
  display: flex;
  flex-direction: column;
  text-align: right;
  font-size: 20.500px;
  line-height: 28px;
  letter-spacing: -0.5px;
}
.badge {
  width: 28px;
  height: 28px;
  margin-left: 20px;
  border-radius: 50%;
  background: #f08066;
  color: #000;
  font-size: 18px;
  line-height: 26px;
  text-align: center;
}
```
